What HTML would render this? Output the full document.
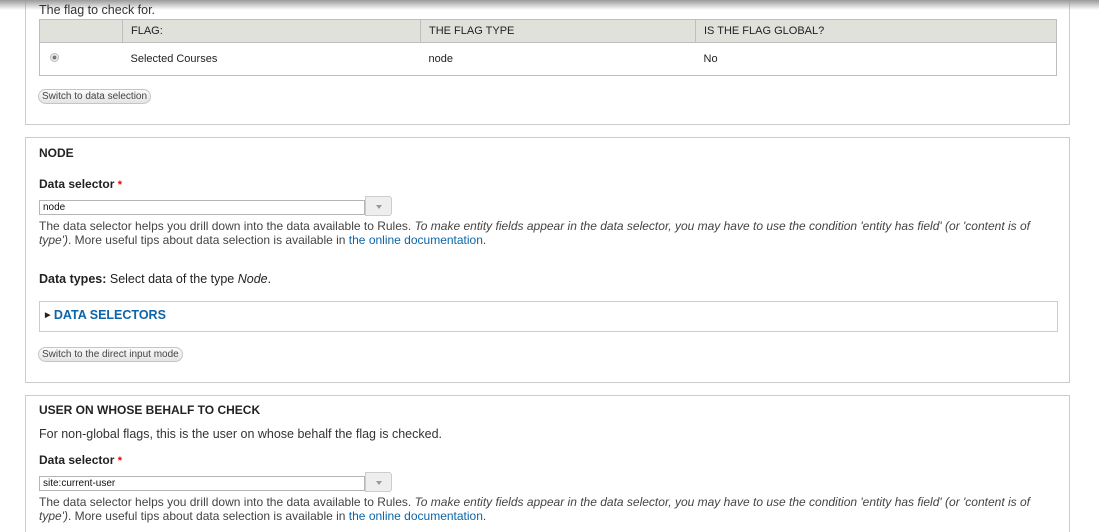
<!DOCTYPE html>
<html style="overflow:hidden"><head><style>
html,body{margin:0;width:1099px;height:532px;overflow:hidden}
body{background:#fff;font-family:"Liberation Sans",sans-serif;color:#333;position:relative}
.a{position:absolute;white-space:nowrap}
.fs{position:absolute;left:25px;width:1043px;border:1px solid #ccc;background:#fff}
.shadow{position:absolute;left:0;top:0;width:1099px;height:10px;background:linear-gradient(#9a9a9a,rgba(255,255,255,0))}
table{position:absolute;left:39px;top:19px;width:1018px;border-collapse:collapse;font-size:11px;color:#222}
td{border:1px solid #bebebe;padding:0 8px}
tr.h td{background:#e1e1dc;height:22px}
tr.r td{height:32px;border-left:none;border-right:none}
.btn{position:absolute;font-size:10px;color:#444;border:1px solid #c5c5c5;border-radius:8px;background:linear-gradient(#fbfbfb,#e4e4e4);padding:0 3px;height:13px;line-height:13px;white-space:nowrap}
.d{font-size:12px;color:#444;line-height:14px}
.lbl{font-size:12px;font-weight:bold;color:#222}
.star{color:#e00;font-size:11px}
.in{position:absolute;left:39px;height:15px;border:1px solid #b5b5b5;font-size:10px;line-height:13px;padding-left:3px;color:#111;box-sizing:border-box;width:326px}
.dd{position:absolute;left:365px;width:27px;height:20px;border:1px solid #ccc;background:#eee;border-radius:0 3px 3px 0;box-sizing:border-box}
.dd:after{content:"";position:absolute;left:10px;top:8px;border:3px solid transparent;border-top:4px solid #999}
a{color:#0b65a8;text-decoration:none}
</style></head><body>
<div class="fs" style="top:-2px;height:125px"></div>
<div class="shadow"></div>
<div class="a" style="left:39px;top:3px;font-size:12.5px;color:#333">The flag to check for.</div>
<table>
<tr class="h"><td style="width:66px"></td><td style="width:281px">FLAG:</td><td style="width:258px">THE FLAG TYPE</td><td>IS THE FLAG GLOBAL?</td></tr>
<tr class="r"><td style="border-left:1px solid #bebebe"><span style="display:inline-block;width:7px;height:7px;border-radius:50%;border:1px solid #bbb;background:radial-gradient(#777 35%,#eee 45%);margin-left:2px"></span></td><td>Selected Courses</td><td>node</td><td style="border-right:1px solid #bebebe">No</td></tr>
</table>
<div class="btn" style="left:38px;top:89px">Switch to data selection</div>

<div class="fs" style="top:137px;height:244px"></div>
<div class="a lbl" style="left:39px;top:146px">NODE</div>
<div class="a lbl" style="left:39px;top:177px">Data selector <span class="star">*</span></div>
<div class="in" style="top:200px">node</div><div class="dd" style="top:196px"></div>
<div class="a d" style="left:39px;top:219px">The data selector helps you drill down into the data available to Rules. <i>To make entity fields appear in the data selector, you may have to use the condition 'entity has field' (or 'content is of</i></div>
<div class="a d" style="left:39px;top:233px"><i>type')</i>. More useful tips about data selection is available in <a>the online documentation</a>.</div>
<div class="a" style="left:39px;top:272px;font-size:12.5px;color:#222"><b>Data types:</b> Select data of the type <i>Node</i>.</div>
<div style="position:absolute;left:39px;top:301px;width:1017px;height:29px;border:1px solid #ccc"></div>
<div class="a" style="left:45px;top:308px;font-size:12.5px;font-weight:bold;color:#0b65a8"><span style="font-size:7px;color:#222;vertical-align:2px">▶</span> DATA SELECTORS</div>
<div class="btn" style="left:38px;top:347px">Switch to the direct input mode</div>

<div class="fs" style="top:395px;height:150px"></div>
<div class="a lbl" style="left:39px;top:403px">USER ON WHOSE BEHALF TO CHECK</div>
<div class="a" style="left:39px;top:427px;font-size:12.5px;color:#333">For non-global flags, this is the user on whose behalf the flag is checked.</div>
<div class="a lbl" style="left:39px;top:453px">Data selector <span class="star">*</span></div>
<div class="in" style="top:476px">site:current-user</div><div class="dd" style="top:472px"></div>
<div class="a d" style="left:39px;top:495px">The data selector helps you drill down into the data available to Rules. <i>To make entity fields appear in the data selector, you may have to use the condition 'entity has field' (or 'content is of</i></div>
<div class="a d" style="left:39px;top:509px"><i>type')</i>. More useful tips about data selection is available in <a>the online documentation</a>.</div>
</body></html>
